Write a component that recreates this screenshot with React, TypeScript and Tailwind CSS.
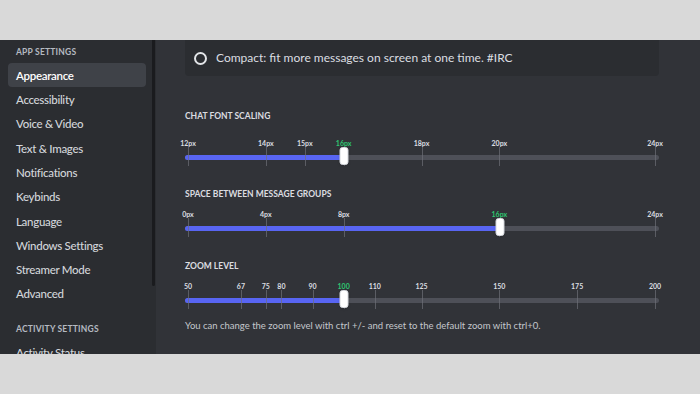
import * as React from "react"

type Mark = { label: string; value: number }

type SliderProps = {
  min: number
  max: number
  value: number
  marks: Mark[]
}

const NAV_ITEMS = [
  "Appearance",
  "Accessibility",
  "Voice & Video",
  "Text & Images",
  "Notifications",
  "Keybinds",
  "Language",
  "Windows Settings",
  "Streamer Mode",
  "Advanced",
]

const FONT_MARKS: Mark[] = [12, 14, 15, 16, 18, 20, 24].map((v) => ({
  label: `${v}px`,
  value: v,
}))

const SPACE_MARKS: Mark[] = [0, 4, 8, 16, 24].map((v) => ({
  label: `${v}px`,
  value: v,
}))

const ZOOM_MARKS: Mark[] = [50, 67, 75, 80, 90, 100, 110, 125, 150, 175, 200].map(
  (v) => ({ label: `${v}`, value: v })
)

// ticks sit 3px inside each end of the 474px track
const toX = (v: number, min: number, max: number) =>
  3 + ((v - min) / (max - min)) * 467

function Slider({ min, max, value, marks }: SliderProps) {
  const handleX = toX(value, min, max)
  return (
    <div className="relative h-[28px] w-full">
      {/* track */}
      <div className="absolute top-[16.5px] right-0 left-0 h-[5px] rounded-full bg-[#4e5058]" />
      <div
        className="absolute top-[16.5px] left-0 h-[5px] rounded-full bg-[#5865f2]"
        style={{ width: handleX }}
      />
      {marks.map((m) => {
        const x = toX(m.value, min, max)
        const active = m.value === value
        return (
          <React.Fragment key={m.label}>
            <div
              className={
                active
                  ? "absolute top-0 h-[10px] -translate-x-1/2 text-[7px] leading-[10px] font-bold whitespace-nowrap text-[#2dc770]"
                  : "absolute top-0 h-[10px] -translate-x-1/2 text-[7px] leading-[10px] font-bold whitespace-nowrap text-[#dbdee1]"
              }
              style={{ left: x }}
            >
              {m.label}
            </div>
            <div
              className="absolute top-[9px] h-[19px] w-px bg-[#6d6f78]/70"
              style={{ left: x }}
            />
          </React.Fragment>
        )
      })}
      {/* handle */}
      <div
        className="absolute top-[9px] h-[18px] w-[9px] -translate-x-1/2 rounded-[3px] border border-[#d4d7dc] bg-white shadow"
        style={{ left: handleX + 0.5 }}
      />
    </div>
  )
}

function SectionTitle({ children }: { children: React.ReactNode }) {
  return (
    <h2 className="h-[12px] text-[8.5px] leading-[12px] font-bold text-[#dcdde0] uppercase">
      {children}
    </h2>
  )
}

export default function App() {
  return (
    <div
      className="flex h-[394px] w-[700px] flex-col overflow-hidden bg-[#d9d9d9]"
      style={{ fontFamily: "Lato, 'Noto Sans', sans-serif" }}
    >
      <div className="h-[40px] shrink-0" />

      <div className="flex h-[314px] shrink-0 overflow-hidden">
        {/* Sidebar */}
        <aside className="relative w-[156px] shrink-0 bg-[#2b2d31] pr-[10px] pl-2">
          <div className="mt-[6px] mb-[5px] h-[12px] pl-2 text-[8.5px] leading-[12px] font-bold tracking-[0.2px] text-[#b5bac1] uppercase">
            App Settings
          </div>
          <nav className="flex flex-col">
            {NAV_ITEMS.map((item, i) => (
              <div
                key={item}
                className={
                  i === 0
                    ? "flex h-[24.33px] items-center rounded-[4px] bg-[#3f4248] pl-2 text-[11.5px] font-semibold tracking-[-0.3px] text-white"
                    : "flex h-[24.33px] items-center rounded-[4px] pl-2 text-[11.5px] font-medium tracking-[-0.3px] text-[#d2d5da]"
                }
              >
                {item}
              </div>
            ))}
          </nav>
          <div className="mt-[17px] mb-[5px] h-[12px] pl-2 text-[8.5px] leading-[12px] font-bold tracking-[0.2px] text-[#b5bac1] uppercase">
            Activity Settings
          </div>
          <div className="flex h-[24px] items-center pl-2 text-[11.5px] font-medium tracking-[-0.3px] text-[#d2d5da]">
            Activity Status
          </div>
          {/* scrollbar */}
          <div className="absolute top-0 right-[1px] h-[246px] w-[3px] rounded-b-full bg-[#1a1b1e]" />
        </aside>

        {/* Content */}
        <main className="flex-1 bg-[#313338] pr-[41px] pl-[29px]">
          <div className="flex h-[36px] items-center gap-[9px] rounded-b-[4px] bg-[#2b2d31] pl-[9px]">
            <span className="h-[13px] w-[13px] rounded-full border-2 border-[#e3e5e8]" />
            <span className="text-[12px] text-[#dbdee1]">
              Compact: fit more messages on screen at one time. #IRC
            </span>
          </div>

          <div className="mt-[34px]">
            <SectionTitle>Chat Font Scaling</SectionTitle>
            <div className="mt-[16px]">
              <Slider min={12} max={24} value={16} marks={FONT_MARKS} />
            </div>
          </div>

          <div className="mt-[22px]">
            <SectionTitle>Space Between Message Groups</SectionTitle>
            <div className="mt-[9px]">
              <Slider min={0} max={24} value={16} marks={SPACE_MARKS} />
            </div>
          </div>

          <div className="mt-[23px]">
            <SectionTitle>Zoom Level</SectionTitle>
            <div className="mt-[9px]">
              <Slider min={50} max={200} value={100} marks={ZOOM_MARKS} />
            </div>
            <p className="mt-[9.5px] text-[9.5px] leading-[14px] text-[#c4c7cc]">
              You can change the zoom level with ctrl +/- and reset to the
              default zoom with ctrl+0.
            </p>
          </div>
        </main>
      </div>

      <div className="flex-1" />
    </div>
  )
}
